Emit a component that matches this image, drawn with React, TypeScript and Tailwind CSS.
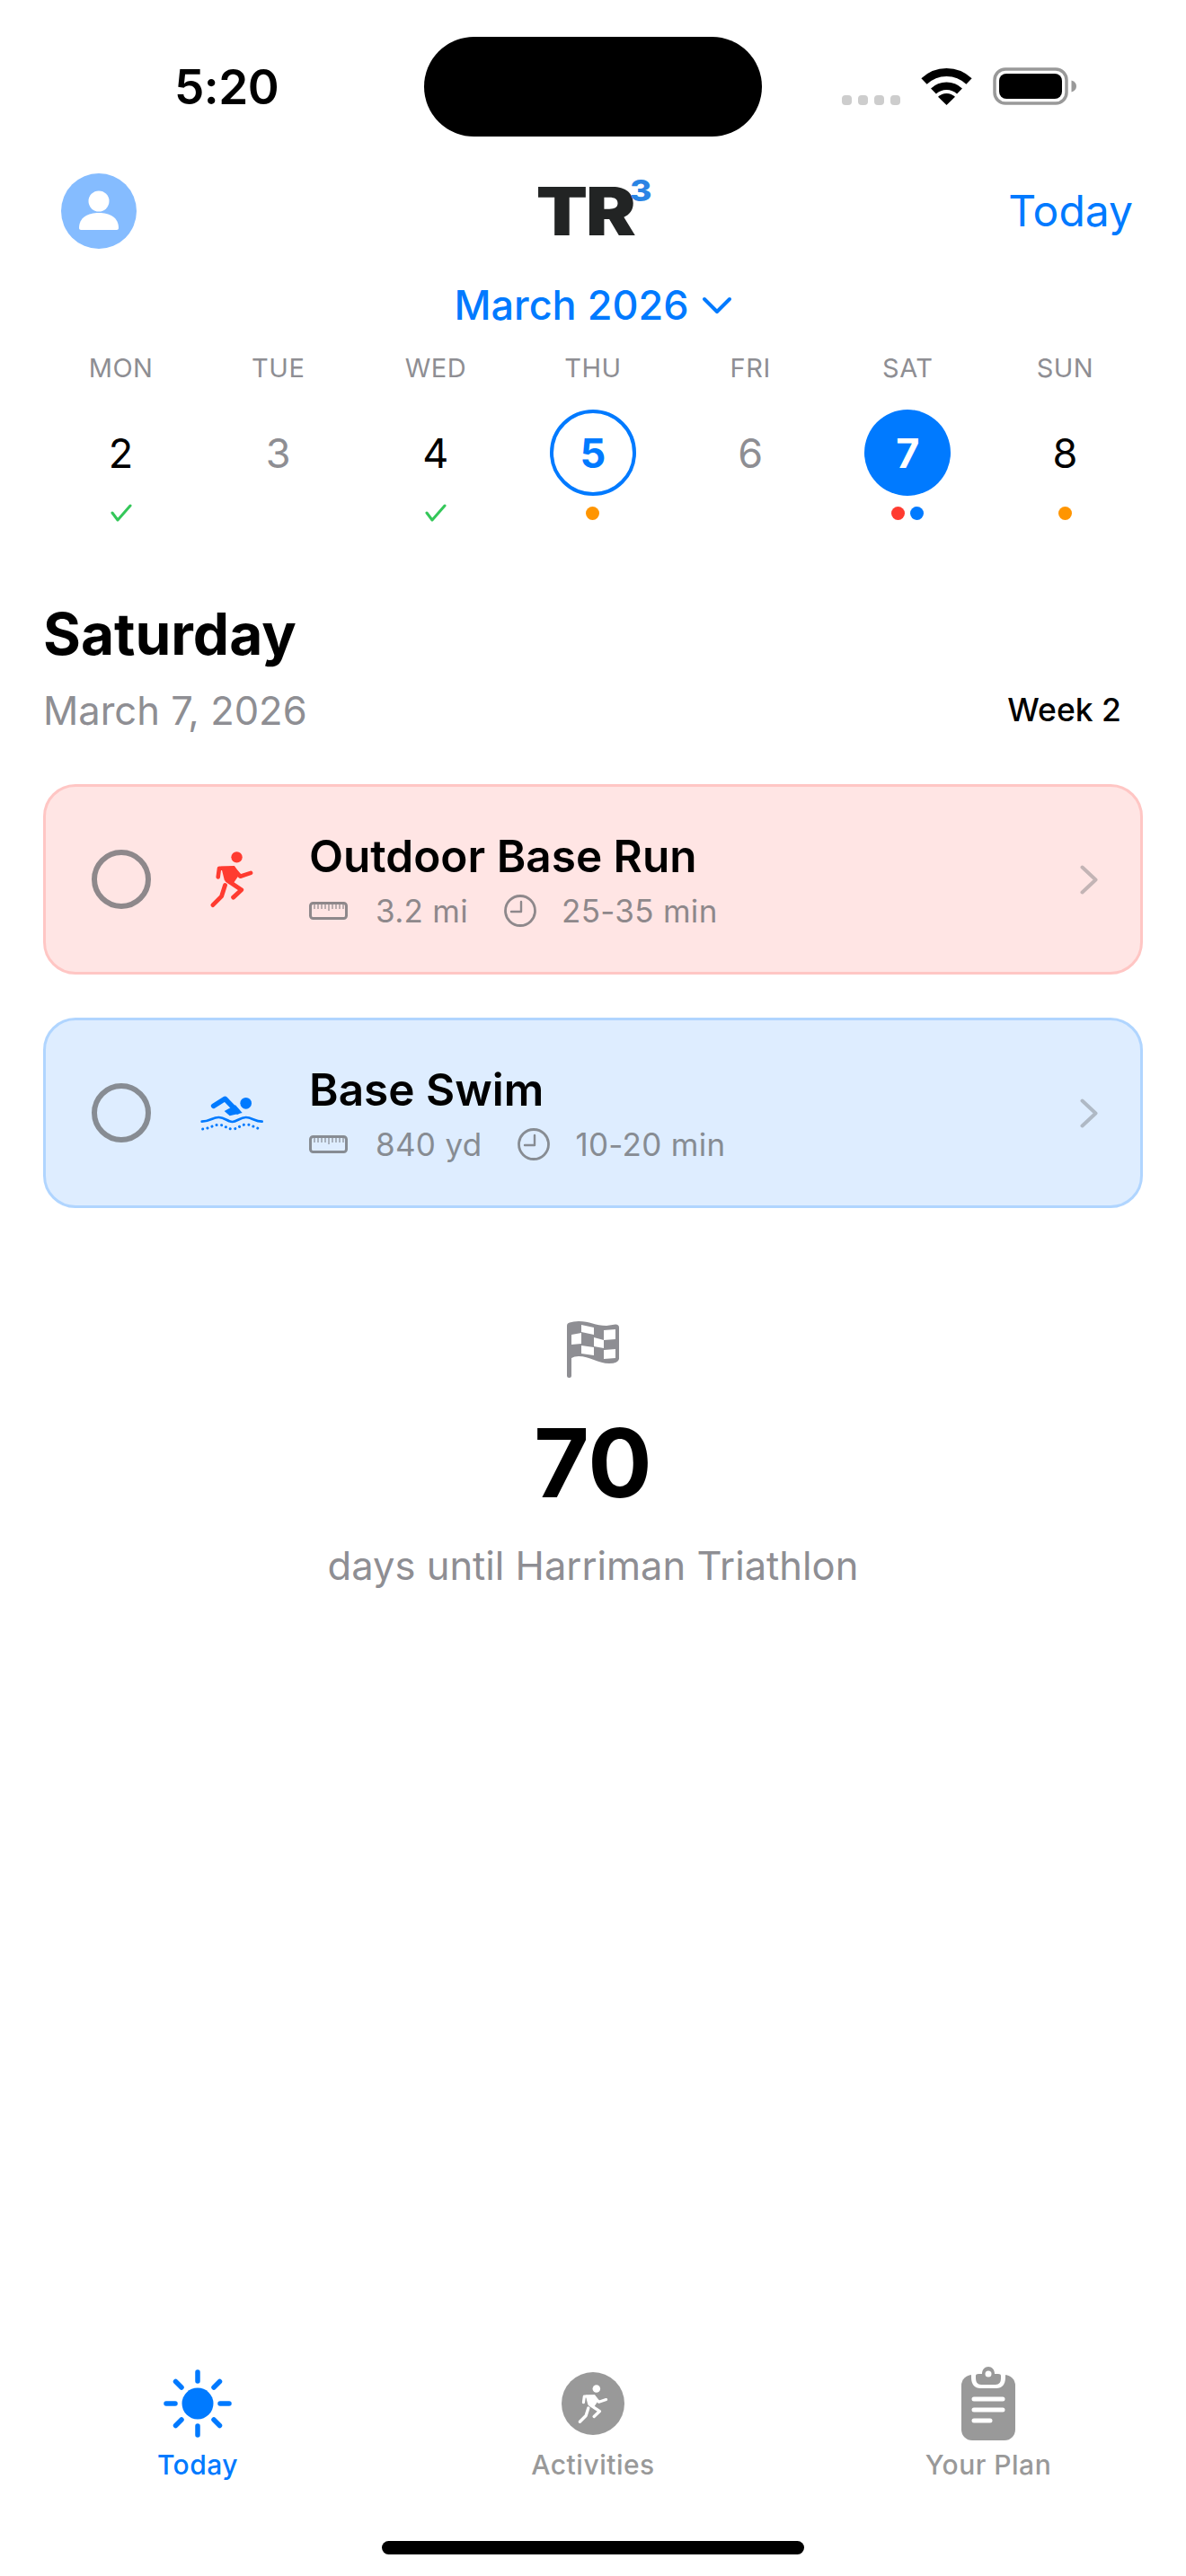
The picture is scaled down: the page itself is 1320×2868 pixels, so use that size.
const BLUE = "#007aff";

function Wifi() {
  return (
    <svg width="57" height="42" viewBox="0 0 57 42" fill="none" stroke="#000">
      <path d="M3.5 15.5A36 36 0 0 1 53.5 15.5" strokeWidth="9" />
      <path d="M14 26.5A21 21 0 0 1 43 26.5" strokeWidth="8.5" />
      <path d="M28.5 42L19 32.8A13.5 13.5 0 0 1 38 32.8Z" fill="#000" stroke="none" />
    </svg>
  );
}

function Battery() {
  return (
    <svg width="93" height="42" viewBox="0 0 93 42">
      <rect x="2" y="2" width="80" height="38" rx="12" fill="none" stroke="#999" strokeWidth="3.5" />
      <rect x="7" y="7" width="70" height="28" rx="8" fill="#000" />
      <path d="M87.5 14.5C91 15.5 93 18 93 21S91 26.500 87.500 27.500Z" fill="#999" />
    </svg>
  );
}

function StatusBar() {
  return (
    <div className="flex h-[170px] items-start">
      <div className="ml-[194px] mt-[70px] w-[278px] text-[53px] font-semibold leading-[54px] tracking-[-0.5px] text-black">
        5:20
      </div>
      <div className="mt-[41px] h-[111px] w-[376px] rounded-full bg-black" />
      <div className="ml-[89px] mt-[75px] flex items-end">
        <div className="flex gap-[7px] pb-0">
          {[0, 1, 2, 3].map((i) => (
            <span key={i} className="h-[11px] w-[11px] rounded-[4px] bg-[#cdcdcd]" />
          ))}
        </div>
        <div className="ml-[23px]">
          <Wifi />
        </div>
        <div className="ml-[23px]">
          <Battery />
        </div>
      </div>
    </div>
  );
}

function Avatar() {
  return (
    <div className="flex h-[84px] w-[84px] items-center justify-center rounded-full bg-[#85bcff]">
      <svg width="48" height="48" viewBox="0 0 48 48" fill="#fff">
        <circle cx="24" cy="13" r="11.500" />
        <path d="M2 43C2 31 12 26 24 26S46 31 46 43C46 44 45 45 44 45H4C3 45 2 44 2 43Z" />
      </svg>
    </div>
  );
}

function Header() {
  return (
    <div className="mt-[23px] grid h-[84px] grid-cols-[535px_auto_1fr] items-center pl-[68px] pr-[59px]">
      <Avatar />
      <div className="relative origin-center scale-x-[1.13] text-[74px] font-black leading-[84px] tracking-[-2px] text-[#222424]">
        TR
        <span className="absolute left-full top-[3px] ml-[-4px] text-[33px] font-extrabold leading-[33px] tracking-normal text-[#2a84e4]">3</span>
      </div>
      <div className="justify-self-end text-[48px] leading-[60px] text-[#007aff]">Today</div>
    </div>
  );
}

function MonthPicker() {
  return (
    <div className="mt-[36px] flex h-[54px] items-center justify-center">
      <span className="text-[45px] font-medium leading-[54px] text-[#007aff]">March 2026</span>
      <svg className="ml-[14px]" width="34" height="20" viewBox="0 0 34 20" fill="none" stroke={BLUE} strokeWidth="4" strokeLinecap="round" strokeLinejoin="round">
        <path d="M3 3L17 17L31 3" />
      </svg>
    </div>
  );
}

function Check() {
  return (
    <svg width="24" height="20" viewBox="0 0 24 20" fill="none" stroke="#34c759" strokeWidth="3" strokeLinecap="round" strokeLinejoin="round">
      <path d="M2 10L8 18L22 2" />
    </svg>
  );
}

function Dot({ color }: { color: string }) {
  return <span className="h-[15px] w-[15px] rounded-full" style={{ backgroundColor: color }} />;
}

const DAYS = [
  { label: "MON", day: 2, mark: "check" },
  { label: "TUE", day: 3, muted: true },
  { label: "WED", day: 4, mark: "check" },
  { label: "THU", day: 5, state: "today", dots: ["#ff9500"] },
  { label: "FRI", day: 6, muted: true },
  { label: "SAT", day: 7, state: "selected", dots: ["#ff3b30", "#007aff"] },
  { label: "SUN", day: 8, dots: ["#ff9500"] },
];

function DayCell({ d }: { d: (typeof DAYS)[number] }) {
  let circle = "text-black";
  if (d.muted) circle = "text-[#8e8e93]";
  if (d.state === "today") circle = "border-[4px] border-[#007aff] text-[#007aff] font-bold";
  if (d.state === "selected") circle = "bg-[#007aff] text-white font-bold";

  return (
    <div className="flex flex-col items-center">
      <div className="h-[30px] text-[29px] leading-[30px] tracking-[0.5px] text-[#8e8e93]">{d.label}</div>
      <div className={`mt-[31px] flex h-[96px] w-[96px] items-center justify-center rounded-full text-[45px] leading-none ${circle}`}>
        {d.day}
      </div>
      <div className="mt-[9px] flex h-[20px] items-center gap-[6px]">
        {d.mark === "check" && <Check />}
        {d.dots?.map((c) => <Dot key={c} color={c} />)}
      </div>
    </div>
  );
}

function Calendar() {
  return (
    <div className="mt-[28px] grid grid-cols-7 px-[47px]">
      {DAYS.map((d) => (
        <DayCell key={d.label} d={d} />
      ))}
    </div>
  );
}

function Runner({ color, width, height }: { color: string; width: number; height: number }) {
  return (
    <svg width={width} height={height} viewBox="575 258 160 200" fill="none" stroke={color} strokeLinecap="round" strokeLinejoin="round">
      <circle cx="672" cy="282" r="19" fill={color} stroke="none" />
      <path d="M608 350L612 320L660 320L684 348L720 336" strokeWidth="14" />
      <path d="M640 362L688 394L660 420" strokeWidth="15" />
      <path d="M618 314L664 312L682 340L660 372L630 362Z" fill={color} stroke="none" />
      <path d="M632 378L620 416L590 446" strokeWidth="15" />
    </svg>
  );
}

function Swimmer() {
  return (
    <svg width="72" height="42" viewBox="545 296 216 124" fill="none" stroke={BLUE} strokeLinecap="round" strokeLinejoin="round">
      <circle cx="700" cy="326" r="19" fill={BLUE} stroke="none" />
      <path d="M592 335L630 311L672 354" strokeWidth="17" />
      <path d="M628 352L665 332L688 358L646 368Z" fill={BLUE} stroke="none" />
      <path d="M553 387C580 387 590 372 610 373S640 388 655 388S680 373 700 373S730 387 754 387" strokeWidth="8" />
      <path d="M556 412C580 410 590 398 610 398S635 412 655 412S680 398 700 397S730 410 752 412" strokeWidth="9" strokeDasharray="0.1 16" />
    </svg>
  );
}

function Ruler() {
  return (
    <svg width="43" height="20" viewBox="0 0 43 20" fill="none" stroke="currentColor">
      <rect x="1.500" y="1.500" width="40" height="17" rx="3" strokeWidth="3" />
      <path d="M6 3V8M10 3V8M14 3V8M18 3V8M22 3V10M26 3V8M30 3V8M34 3V8M38 3V8" strokeWidth="1.200" />
    </svg>
  );
}

function Clock() {
  return (
    <svg width="36" height="36" viewBox="0 0 36 36" fill="none" stroke="currentColor" strokeWidth="2.800" strokeLinecap="round" strokeLinejoin="round">
      <circle cx="18" cy="18" r="16.500" />
      <path d="M19 8V19H8" strokeWidth="2.400" />
    </svg>
  );
}

function WorkoutCard({
  title,
  distance,
  duration,
  icon,
  shell,
  radio,
  meta,
  chevron,
}: {
  title: string;
  distance: string;
  duration: string;
  icon: React.ReactNode;
  shell: string;
  radio: string;
  meta: string;
  chevron: string;
}) {
  return (
    <div className={`flex h-[212px] items-center rounded-[36px] border-[3px] pl-[51px] pr-[47px] ${shell}`}>
      <div className={`h-[66px] w-[66px] shrink-0 rounded-full border-[6px] ${radio}`} />
      <div className="ml-[22px] flex w-[136px] shrink-0 justify-center">{icon}</div>
      <div className="ml-[18px] flex-1 pt-[3px]">
        <div className="text-[49.5px] font-semibold leading-[56px] text-black">{title}</div>
        <div className={`mt-[11px] flex items-center text-[35px] leading-[44px] tracking-[0.3px] ${meta}`}>
          <Ruler />
          <span className="ml-[31px] mr-[40px]">{distance}</span>
          <Clock />
          <span className="ml-[28px]">{duration}</span>
        </div>
      </div>
      <svg width="20" height="33" viewBox="0 0 20 33" fill="none" stroke={chevron} strokeWidth="4" strokeLinecap="round" strokeLinejoin="round">
        <path d="M2.500 2.500L17.500 16.500L2.500 30.500" />
      </svg>
    </div>
  );
}

const FLAG_CELLS = [
  "16,4 30,7 30,15 16,12",
  "41,10 54,9 54,20 41,21",
  "5,15 16,13 16,25 5,26",
  "30,18 41,21 41,30 30,28",
  "16,27 30,29 30,38 16,36",
  "41,32 54,31 54,41 41,42",
];

function Flag() {
  return (
    <svg width="58" height="63" viewBox="0 0 58 63">
      <path d="M0 5Q0 2 3 1.500Q7 0 13 0C25 0 32 5 44 5L54 3.500Q58 3.500 58 7V42Q57 47 47 47C35 47 25 39 13 39Q8 39 5 41V61Q5 63 2.500 63Q0 63 0 61Z" fill="#8e8e93" />
      {FLAG_CELLS.map((p) => (
        <polygon key={p} points={p} fill="#fff" />
      ))}
    </svg>
  );
}

function Sun() {
  return (
    <svg width="76" height="76" viewBox="0 0 76 76" fill={BLUE} stroke={BLUE} strokeWidth="5.500" strokeLinecap="round">
      <circle cx="38" cy="38" r="17.500" stroke="none" />
      <path d="M38 3V13M38 63V73M3 38H13M63 38H73M13.500 13.500L20 20M56 56L62.500 62.500M62.500 13.500L56 20M20 56L13.500 62.500" />
    </svg>
  );
}

function ActivitiesIcon() {
  return (
    <div className="flex h-[70px] w-[70px] items-center justify-center rounded-full bg-[#999]">
      <Runner color="#fff" width={36} height={45} />
    </div>
  );
}

function PlanIcon() {
  return (
    <svg width="60" height="82" viewBox="0 0 60 82">
      <rect x="0" y="9" width="60" height="73" rx="12" fill="#999" />
      <path d="M11 7H49V12C49 20 45 24 39 24H21C15 24 11 20 11 12Z" fill="#fff" />
      <path d="M16 10Q16 8 19 8H23C23 3 26 0 30 0S37 3 37 8H41Q44 8 44 10V13Q44 20 38 20H22Q16 20 16 13Z" fill="#999" />
      <circle cx="30" cy="8" r="3.500" fill="#fff" />
      <path d="M14 36H46M14 48H46M14 60H32" stroke="#fff" strokeWidth="5" strokeLinecap="round" />
    </svg>
  );
}

function Tab({ icon, label, active }: { icon: React.ReactNode; label: string; active?: boolean }) {
  return (
    <div className="flex flex-col items-center">
      <div className="flex h-[84px] items-center justify-center">{icon}</div>
      <div className={`mt-[8px] text-[30px] font-medium leading-[36px] tracking-[0.5px] ${active ? "text-[#007aff]" : "text-[#999]"}`}>
        {label}
      </div>
    </div>
  );
}

export default function App() {
  return (
    <div className="flex h-[2868px] w-[1320px] flex-col overflow-hidden bg-white font-['Inter',sans-serif]">
      <StatusBar />
      <Header />
      <MonthPicker />
      <Calendar />

      <div className="mt-[87px] px-[48px]">
        <h1 className="text-[64px] font-bold leading-[76px] text-black">Saturday</h1>
        <div className="mt-[19px] flex items-center justify-between">
          <span className="text-[43.500px] leading-[56px] text-[#8e8e93]">March 7, 2026</span>
          <span className="mr-[24px] text-[35.500px] font-medium leading-[56px] text-black">Week 2</span>
        </div>
      </div>

      <div className="mt-[54px] flex flex-col gap-[48px] px-[48px]">
        <WorkoutCard
          title="Outdoor Base Run"
          distance="3.2 mi"
          duration="25-35 min"
          icon={<Runner color="#ff3b30" width={52} height={66} />}
          shell="border-[#ffc6c4] bg-[#ffe5e4]"
          radio="border-[#8e888b]"
          meta="text-[#8e888b]"
          chevron="#c3b4b5"
        />
        <WorkoutCard
          title="Base Swim"
          distance="840 yd"
          duration="10-20 min"
          icon={<Swimmer />}
          shell="border-[#b0d5ff] bg-[#deedff]"
          radio="border-[#878c93]"
          meta="text-[#878c93]"
          chevron="#afb9c5"
        />
      </div>

      <div className="mt-[126px] flex flex-col items-center">
        <Flag />
        <div className="mt-[30px] text-[106px] font-bold leading-[130px] text-black">70</div>
        <div className="mt-[21px] text-[43.500px] leading-[56px] text-[#8e8e93]">days until Harriman Triathlon</div>
      </div>

      <div className="flex-1" />

      <div className="grid grid-cols-3">
        <Tab icon={<Sun />} label="Today" active />
        <Tab icon={<ActivitiesIcon />} label="Activities" />
        <Tab icon={<PlanIcon />} label="Your Plan" />
      </div>
      <div className="mb-[24px] mt-[67px] h-[15px] w-[470px] self-center rounded-full bg-black" />
    </div>
  );
}
